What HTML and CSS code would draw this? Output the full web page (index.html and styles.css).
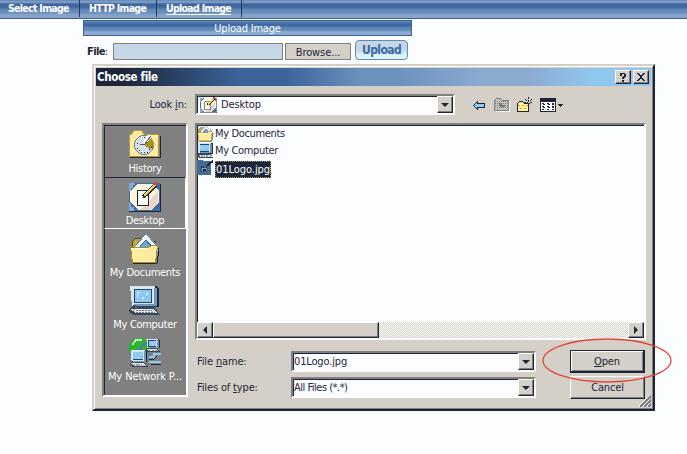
FILE: index.html
```html
<!DOCTYPE html>
<html lang="en">
<head>
<meta charset="utf-8">
<title>Upload Image</title>
<link rel="stylesheet" href="styles.css">
</head>
<body>
<svg class="defs" width="0" height="0" aria-hidden="true">
  <symbol id="desktop" viewBox="0 0 32 30">
    <path fill="#406ba5" d="M0 1h31v28H0z"/><path fill="#7eace0" d="M0 1h6v2H4v3H2v3H0zM0 21h2v4h3v4H0z"/>
    <path fill="#fcf6e0" d="M8 2h15l7 7v11l-8 8H9l-8-8V9z"/><path fill="#ecd4c8" d="M18 22l11-13v11l-8 8H10z"/>
    <path fill="#fffef4" stroke="#1c2638" d="M8.500 8.500h11v15h-11z"/>
    <path stroke="#1c2638" stroke-width="4" d="M14 15L27 3"/><path stroke="#e5cc38" stroke-width="2.500" d="M15 14L26 3"/><path stroke="#fff4a0" d="M15 13L25 3"/>
    <path fill="#e33" d="M25 0h3v3h-3z"/><path fill="none" stroke="#1c2638" d="M0 29.500h31.500V2"/>
  </symbol>
  <symbol id="documents" viewBox="0 0 32 32">
    <path fill="#c9a928" stroke="#4b482c" d="M3.500 8.500l3-3h7l3 3h10v17h-23z"/>
    <path fill="#f8fcff" stroke="#668cb7" d="M5 14L17 1l14 15-8 10z"/><path fill="#70a6d4" stroke="#3b6697" d="M11 13l6-6 6 7-7 6z"/>
    <path fill="#ffec9e" stroke="#a88e24" d="M1.500 14.500h18l3-2h6l-2 17h-23z"/>
    <path fill="none" stroke="#1c2638" d="M4 30.500h24l2-15"/><path stroke="#fff" d="M3 15.500h16"/>
  </symbol>
  <symbol id="computer" viewBox="0 0 32 32">
    <path fill="#1c2638" d="M3 1h25l2 3v18H3z"/><path fill="#dce5ee" d="M1 1h25v20H3z"/><path fill="#7495b9" d="M25 3h3v18H5v-2h20z"/>
    <path fill="#1c4776" d="M5 4h18v14H5z"/><path fill="#8cc8f0" d="M6 5h16v12H6z"/><path fill="#d5f3ff" d="M8 7h4v1H9v4H8zM17 8h2v2h-2zM13 12h2v2h-2z"/>
    <path fill="#36465d" d="M8 21h17v3H8zM0 24l4-4h2v3h20l5 7H5l-5-3z"/><path fill="#e5e5df" d="M1 24h23l4 4H7z"/>
    <path stroke="#66758c" stroke-dasharray="2 1" d="M4 25.500h19M7 27.500h19"/><path fill="#d8b640" d="M4 24h2v2H4z"/>
  </symbol>
  <symbol id="photo" viewBox="0 0 16 16">
    <path fill="#446b9a" d="M0 1h6v1h7v13H0z"/><path fill="#1c2638" d="M9 5l6-4v2l-4 3v1H9z"/><path stroke="#1c2638" stroke-dasharray="1 1" d="M4 7.500h6M3 9.500h2M9 9.500h2M4 11.500h6"/><path fill="#7fa7cb" d="M5 8h4v3H5z"/><path fill="#1c2638" d="M6 9h2v2H6z"/><path fill="#c75b55" d="M8 8h1v1H8z"/>
  </symbol>
</svg>

<nav class="menu"><a>Select Image</a><a>HTTP Image</a><a class="current">Upload Image</a></nav>
<section class="upload">
  <h1>Upload Image</h1>
  <div class="file-row"><b>File<i>:</i></b><span class="path"></span><span class="browse">Browse...</span><span class="send">Upload</span></div>
</section>

<main class="dialog">
  <header class="title"><span class="caption">Choose file</span>
    <span class="btn"><svg width="10" height="10" viewBox="0 0 10 10"><path d="M2 1h5v1h1v3H7v1H6v1H4V5h1V4h1V2H4v2H2zM4 8h2v2H4z"/></svg></span>
    <span class="btn close"><svg width="10" height="10" viewBox="0 0 10 10"><path d="M1 1h2v1h1v1h2V2h1V1h2v1H8v1H7v1H6v2h1v1h1v1h1v1H7V8H6V7H4v1H3v1H1V8h1V7h1V6h1V4H3V3H2V2H1z"/></svg></span>
  </header>
  <div class="lookup">
    <span class="look">Look <u>i</u>n:</span>
    <div class="combo look-combo"><svg class="mini" width="17" height="16"><use href="#desktop"/></svg><span class="value">Desktop</span><span class="drop"><i class="tri"></i></span></div>
    <div class="tools">
      <svg width="14" height="16" viewBox="0 0 14 16"><path fill="#90caf0" stroke="#1c2638" d="M1.500 8.500l4-4v2h7v4h-7v2z"/></svg>
      <svg width="17" height="16" viewBox="0 0 17 16"><path fill="#fff" d="M2 4h14v11H2z"/><path fill="#c5c3be" stroke="#808080" d="M.5 13.500v-10l2-2h4l2 2h6v10z"/><path stroke="#808080" stroke-dasharray="1 1" d="M1 4.500h14M1 6.500h14M1 8.500h14M1 10.500h14"/><path fill="#777" d="M5 6h3v2h3v2H6z"/></svg>
      <svg width="17" height="16" viewBox="0 0 17 16"><path fill="#ffed9d" stroke="#1c2638" d="M1.500 14.500v-8l2-2h3l2 2h4v8z"/><path stroke="#d6ad32" stroke-dasharray="2 2" d="M2 8.500h10M4 11.500h8"/><path stroke="#1c2638" stroke-dasharray="2 1" d="M12.500 0v9M8 5.500h9"/><path stroke="#1c2638" stroke-dasharray="1 1" d="M9 2l7 7M16 2L9 9"/><path fill="#ffef9e" d="M12 5h1v1h-1z"/></svg>
      <svg width="24" height="16" viewBox="0 0 24 16"><path fill="#fff" stroke="#1c2638" d="M.5 1.500h15v13H.5z"/><path fill="#1c2638" d="M0 1h16v4H0zM18 7h5v1h-1v1h-1v1h-1V9h-1V8h-1zM2 6h2v1H2zM7 6h2v1H7zM12 6h2v1h-2zM2 9h2v1H2zM7 9h2v1H7zM12 9h2v1h-2zM2 12h2v1H2zM7 12h2v1H7zM12 12h2v1h-2z"/><path fill="#1c2638" d="M3 7h2v1H3zM8 7h2v1H8zM12 7h2v1h-2zM3 10h2v1H3zM8 10h2v1H8zM12 10h2v1h-2z"/></svg>
    </div>
  </div>
  <div class="content">
    <aside class="places">
      <div class="place"><svg width="32" height="32" viewBox="0 0 32 32"><path fill="#ffeb9c" stroke="#b39a42" d="M.5 27.500V5.500h2l2-4h8l3 4h14v22z"/><path fill="none" stroke="#1c2638" d="M1 28.500h30.500V7"/><circle cx="15" cy="16" r="9.500" fill="#d9e3ec" stroke="#637b99"/><path fill="#a98f1e" d="M15 16l8-7 2 7-4 4z"/><path fill="#fff" d="M13 12l7-6 2 3-6 6z"/><path stroke="#4b5a70" d="M11 15h5l6-8"/><path stroke="#1c2638" stroke-dasharray="1 2" d="M8 19l4 4h7l4-5M15 8v2M8 14h2"/></svg><span>History</span></div>
      <div class="place selected"><svg width="32" height="30"><use href="#desktop"/></svg><span>Desktop</span></div>
      <div class="place"><svg width="32" height="32"><use href="#documents"/></svg><span>My Documents</span></div>
      <div class="place"><svg width="32" height="32"><use href="#computer"/></svg><span>My Computer</span></div>
      <div class="place"><svg width="34" height="33" viewBox="0 0 34 33"><circle cx="11" cy="12" r="11" fill="#487bb2"/><path fill="#2cb52c" d="M2 5l7-4h6l4 4-5 2-3 5-5 2-3 5-3-5zM14 10l5-3 3 5-4 7-5-2z"/><path fill="#caffbd" d="M7 2h7v2H8l-3 4H3z"/><use href="#computer" x="18" y="1" width="15" height="16"/><use href="#computer" x="1" y="13" width="20" height="19"/><path stroke="#88caf2" stroke-width="2" d="M21 21h5v-3h7M21 26h12"/><path stroke="#1c2638" d="M21 23h5l3-3M23 28h10"/></svg><span class="network">My Network P...</span></div>
    </aside>
    <section class="files">
      <ul>
        <li><svg width="17" height="17"><use href="#documents"/></svg><span>My Documents</span></li>
        <li><svg width="17" height="17"><use href="#computer"/></svg><span>My Computer</span></li>
        <li><svg width="17" height="17"><use href="#photo"/></svg><span class="picked">01Logo.jpg</span></li>
      </ul>
      <div class="scroll"><span class="btn arrow"><i class="left"></i></span><span class="thumb"></span><span class="track"></span><span class="btn arrow"><i class="right"></i></span></div>
    </section>
  </div>
  <div class="fields">
    <label>File <u>n</u>ame:</label><div class="combo"><span class="value">01Logo.jpg</span><span class="drop"><i class="tri"></i></span></div><span class="action primary"><span><u>O</u>pen</span></span>
    <label class="type">Files of <u>t</u>ype:</label><div class="combo"><span class="value all">All Files (*.*)</span><span class="drop"><i class="tri"></i></span></div><span class="action cancel"><span>Cancel</span></span>
  </div>
  <svg class="grip" width="12" height="12" viewBox="0 0 12 12"><path stroke="#fff" d="M0 11L11 0M4 11l7-7M8 11l3-3"/><path stroke="#808080" stroke-width="1.500" d="M1 12L12 1M5 12l7-7M9 12l3-3"/></svg>
  <svg class="highlight" width="131" height="46" viewBox="0 0 131 46"><ellipse cx="65" cy="22.500" rx="64" ry="21.500"/></svg>
</main>
</body>
</html>
```
FILE: styles.css
```css
* { box-sizing: border-box; }
body { margin: 0; width: 687px; height: 454px; overflow: hidden; background: #fcfdff; color: #1c2638; font: 11px/14px "DejaVu Sans Condensed", "Noto Sans", sans-serif; letter-spacing: -.15px; }
svg { display: block; flex: none; shape-rendering: crispEdges; fill: none; }
.defs { position: absolute; }
u { text-underline-offset: 1px; }
.menu { display: flex; height: 19px; border-bottom: 1px solid #3c649b; background: linear-gradient(#6b8db9 0 1px, #8ba8ce 2px, #3f669f 4px 7px, #668bb9 10px 12px, #86a4cb 15px 18px); color: #fff; font-weight: bold; }
.menu a { height: 17px; padding: 2px 0 0 9px; width: 77px; border-right: 1px solid #243b5d; font-size: 10.500px; line-height: 13px; letter-spacing: -.7px; white-space: nowrap; }
.menu a:first-child { width: 80px; padding-left: 8px; }
.menu .current { width: 85px; text-decoration: underline; text-underline-offset: 2px; }
.upload { margin: 1px 0 0 83px; width: 329px; }
h1 { margin: 0; height: 16px; border: 1px solid #3c649b; background: linear-gradient(#648ab9, #3f69a2 3px 5px, #628ab9 7px 9px, #8caad0 11px); color: #fff; text-align: center; font-size: 11px; line-height: 16px; font-weight: normal; letter-spacing: -.2px; }
.file-row { display: flex; height: 21px; margin-top: 3px; align-items: flex-end; }
.file-row b { width: 30px; padding-left: 4px; font-size: 11px; line-height: 17px; letter-spacing: -.6px; }
.file-row b i { font-style: normal; font-weight: normal; }
.path, .browse { height: 17px; border: 1px solid #808080; }
.path { width: 170px; background: #c6d6e7; }
.browse { width: 66px; margin-left: 2px; background: #d4d0c8; text-align: center; line-height: 17px; letter-spacing: -.1px; }
.send { width: 53px; height: 20px; margin: 0 0 0 4px; border: 1px solid #628ab9; border-radius: 4px; background: linear-gradient(#c6d6e7 0 9px, #ddf4f5 14px); color: #3c69a2; font-size: 12px; letter-spacing: -.6px; font-weight: bold; text-align: center; line-height: 18px; }
.dialog { position: relative; width: 563px; height: 347px; margin: 4px 0 0 92px; padding: 2px; border: 2px solid; border-color: #d4d0c8 #1c2638 #1c2638 #d4d0c8; background: #d4d0c8; box-shadow: inset 1px 1px #fff, inset -1px -1px #808080; }
.title { display: flex; align-items: center; height: 18px; padding: 0 2px 0 1px; color: #fff; background: linear-gradient(90deg, #1c2638 0 25px, #3c649b 145px 190px, #6b91bd 265px 300px, #8ca9d0 385px 430px, #8fc8ef 500px); }
.caption { flex: 1; font-weight: bold; font-size: 11.500px; letter-spacing: -.35px; }
.btn, .drop { display: flex; align-items: center; justify-content: center; background: #d4d0c8; border: 1px solid; border-color: #fff #1c2638 #1c2638 #fff; box-shadow: inset -1px -1px #808080; }
.title .btn { width: 16px; height: 14px; }
.title .btn path { fill: #1c2638; }
.title .close { margin-left: 2px; }
.lookup { display: flex; height: 21px; margin: 8px 0 0; }
.look { width: 91px; margin-right: 8px; text-align: right; line-height: 22px; }
.combo { display: flex; height: 21px; border: 2px solid; border-color: #808080 #fff #fff #808080; background: #fcfdff; box-shadow: inset 1px 1px #1c2638; }
.look-combo { width: 260px; }
.mini { margin: 1px 0 0 3px; }
.value { flex: 1; padding-left: 1px; line-height: 18px; }
.value.all { letter-spacing: -.5px; }
.look-combo .value { padding-left: 4px; }
.drop { width: 16px; height: 17px; }
.tri { border: 4px solid transparent; border-top-color: #1c2638; border-bottom: 0; }
.tools { display: flex; margin: 3px 0 0 17px; }
.tools svg:nth-child(2) { margin-left: 8px; }
.tools svg:nth-child(3) { margin-left: 5px; }
.tools svg:nth-child(4) { margin-left: 7px; }
.content { display: flex; gap: 7px; margin: 8px 0 0 6px; }
.places { width: 86px; height: 274px; border: 2px solid; border-color: #808080 #fff #fff #808080; background: #808080; color: #fff; box-shadow: inset 1px 1px #1c2638; }
.place { display: flex; flex-direction: column; align-items: center; height: 52px; padding-top: 4px; white-space: nowrap; }
.place svg { height: 32px; }
.place span { line-height: 14px; margin-top: 1px; letter-spacing: -.3px; }
.place .network { letter-spacing: -.1px; }
.place.selected { padding-top: 3px; border: 1px solid; border-color: #1c2638 #fff #fff #1c2638; background: #848484; }
.files { display: flex; flex-direction: column; width: 451px; height: 217px; border: 2px solid; border-color: #808080 #fff #fff #808080; background: #fcfdff; box-shadow: inset 1px 1px #1c2638; }
.files ul { flex: 1; margin: 0; padding: 0; list-style: none; }
.files li { display: flex; align-items: center; height: 17px; }
.files li span { margin-left: 0; padding: 1px 1px 0; line-height: 14px; letter-spacing: -.35px; }
.files li .picked { border: 1px dotted #9c9868; background: #1c2638; color: #fff; line-height: 15px; padding: 0; margin: 3px 0 0 1px; letter-spacing: -.05px; }
.scroll { display: flex; height: 16px; }
.arrow { width: 16px; }
.left, .right { border: 4px solid transparent; }
.left { border-right-color: #1c2638; border-left: 0; }
.right { border-left-color: #1c2638; border-right: 0; }
.thumb { width: 166px; background: #d4d0c8; border: 1px solid; border-color: #fff #1c2638 #1c2638 #fff; box-shadow: inset -1px -1px #808080; }
.track { flex: 1; background: repeating-conic-gradient(#fff 0 25%, #d4d0c8 0 50%) 0 0 / 2px 2px; }
.fields { display: grid; grid-template-columns: 94px 245px 75px; grid-template-rows: 23px 23px; column-gap: 0; row-gap: 3px; align-items: center; margin: -47px 0 0 101px; }
.fields label { line-height: 17px; }
.action { width: 75px; height: 23px; margin-left: 34px; text-align: center; line-height: 21px; background: #d4d0c8; border: 1px solid; border-color: #fff #1c2638 #1c2638 #fff; box-shadow: inset -1px -1px #808080; }
.primary { border: 2px solid #1c2638; border-width: 1px 2px 2px 1px; box-shadow: inset 1px 1px #fff, inset -1px -1px #808080; }
.grip { position: absolute; right: 2px; bottom: 2px; }
.highlight { position: absolute; left: 448px; top: 272px; shape-rendering: auto; overflow: visible; }
.highlight ellipse { stroke: #e63f37; stroke-width: 1.300; }
```
